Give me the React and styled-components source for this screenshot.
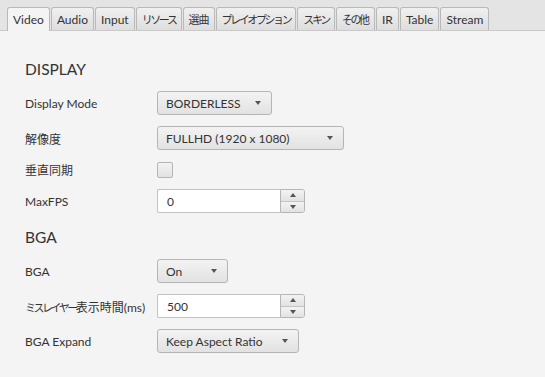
import React from "react";
import styled, { createGlobalStyle } from "styled-components";

const Global = createGlobalStyle`
  html, body { margin: 0; padding: 0; background: #f4f4f4; }
  body {
    font-family: "Lato", "Noto Sans CJK JP", sans-serif;
    font-size: 12px;
    color: #333;
  }
`;

const Page = styled.div`
  width: 545px;
  height: 377px;
  background: #f4f4f4;
  overflow: hidden;
`;

const TabBar = styled.div`
  display: flex;
  align-items: flex-end;
  gap: 1px;
  height: 31px;
  padding-left: 7px;
  background: #e4e4e4;
  border-bottom: 1px solid #c9c9c9;
  box-sizing: border-box;
`;

const Tab = styled.div`
  height: ${(p) => (p.$active ? 24 : 23)}px;
  box-sizing: border-box;
  padding: 0 5px;
  display: flex;
  align-items: center;
  border: 1px solid #b9b9b9;
  border-bottom: none;
  border-radius: 3px 3px 0 0;
  background: ${(p) =>
    p.$active ? "#f4f4f4" : "linear-gradient(#f0f0f0, #dedede)"};
  margin-bottom: ${(p) => (p.$active ? -1 : 0)}px;
  font-size: 12px;
  color: #333;
  white-space: nowrap;
`;

const Kana = styled.span`
  font-size: 11px;
  letter-spacing: ${(p) => p.$ls}px;
`;

const Kanji = styled.span`
  font-size: ${(p) => p.$size}px;
  letter-spacing: ${(p) => p.$ls}px;
`;

const Content = styled.div`
  padding: 27px 25px 0;
  display: flex;
  flex-direction: column;
  gap: 13px;
`;

const Section = styled.div`
  display: grid;
  grid-template-columns: 132px auto;
  row-gap: 11px;
  align-items: center;
  justify-items: start;
`;

const Heading = styled.div`
  grid-column: 1 / -1;
  height: 22px;
  line-height: 22px;
  font-size: 15.5px;
  color: #333;
`;

const Label = styled.div`
  font-size: 12px;
  color: #333;
  white-space: nowrap;
`;

const Combo = styled.div`
  width: ${(p) => p.$w}px;
  height: 24px;
  box-sizing: border-box;
  border: 1px solid #b5b5b5;
  border-radius: 3px;
  background: linear-gradient(#f3f3f3, #e2e2e2);
  display: flex;
  align-items: center;
  justify-content: space-between;
  padding: 0 10px 0 8px;
  font-size: 12px;
  color: #333;
`;

const Arrow = styled.span`
  width: 0;
  height: 0;
  border-left: 3.5px solid transparent;
  border-right: 3.5px solid transparent;
  border-${(p) => (p.$up ? "bottom" : "top")}: 4px solid #555;
`;

const CheckBox = styled.div`
  width: 16px;
  height: 16px;
  box-sizing: border-box;
  border: 1px solid #b5b5b5;
  border-radius: 2px;
  background: linear-gradient(#f3f3f3, #e2e2e2);
`;

const Spinner = styled.div`
  display: flex;
  height: 24px;
`;

const SpinField = styled.div`
  width: 123px;
  box-sizing: border-box;
  border: 1px solid #c2c2c2;
  border-right: none;
  border-radius: 2px 0 0 2px;
  background: #fff;
  display: flex;
  align-items: center;
  padding-left: 9px;
  font-size: 12px;
  color: #333;
`;

const SpinButtons = styled.div`
  width: 25px;
  display: flex;
  flex-direction: column;
  box-sizing: border-box;
  border: 1px solid #b5b5b5;
  border-radius: 0 3px 3px 0;
  overflow: hidden;
`;

const SpinButton = styled.div`
  flex: 1;
  display: flex;
  align-items: center;
  justify-content: center;
  background: linear-gradient(#f3f3f3, #e2e2e2);
  & + & {
    border-top: 1px solid #c4c4c4;
  }
`;

// Split text into kana / kanji / latin runs so the narrow Japanese UI font can be approximated
function Jp({ text, kanaLs = -2.5, kanjiSize = 12, kanjiLs = 0 }) {
  const parts = text.match(/[\u3040-\u30ff]+|[\u3400-\u9fff]+|[^\u3040-\u30ff\u3400-\u9fff]+/g) || [];
  return parts.map((p, i) => {
    if (/[\u3040-\u30ff]/.test(p)) return <Kana key={i} $ls={kanaLs}>{p}</Kana>;
    if (/[\u3400-\u9fff]/.test(p)) return <Kanji key={i} $size={kanjiSize} $ls={kanjiLs}>{p}</Kanji>;
    return <React.Fragment key={i}>{p}</React.Fragment>;
  });
}

const tabs = ["Video", "Audio", "Input", "リソース", "選曲", "プレイオプション", "スキン", "その他", "IR", "Table", "Stream"];

function ComboBox({ w, children }) {
  return (
    <Combo $w={w}>
      <span>{children}</span>
      <Arrow />
    </Combo>
  );
}

function NumberSpinner({ value }) {
  return (
    <Spinner>
      <SpinField>{value}</SpinField>
      <SpinButtons>
        <SpinButton><Arrow $up /></SpinButton>
        <SpinButton><Arrow /></SpinButton>
      </SpinButtons>
    </Spinner>
  );
}

export default function App() {
  return (
    <Page>
      <Global />
      <TabBar>
        {tabs.map((t, i) => (
          <Tab key={t} $active={i === 0}>
            <Jp text={t} kanaLs={-2.4} kanjiSize={11} kanjiLs={-1} />
          </Tab>
        ))}
      </TabBar>
      <Content>
        <Section>
          <Heading>DISPLAY</Heading>
          <Label>Display Mode</Label>
          <ComboBox w={115}>BORDERLESS</ComboBox>
          <Label><Jp text="解像度" /></Label>
          <ComboBox w={187}>FULLHD (1920 x 1080)</ComboBox>
          <Label><Jp text="垂直同期" /></Label>
          <CheckBox />
          <Label>MaxFPS</Label>
          <NumberSpinner value="0" />
        </Section>
        <Section>
          <Heading>BGA</Heading>
          <Label>BGA</Label>
          <ComboBox w={71}>On</ComboBox>
          <Label><Jp text="ミスレイヤー表示時間(ms)" /></Label>
          <NumberSpinner value="500" />
          <Label>BGA Expand</Label>
          <ComboBox w={142}>Keep Aspect Ratio</ComboBox>
        </Section>
      </Content>
    </Page>
  );
}
